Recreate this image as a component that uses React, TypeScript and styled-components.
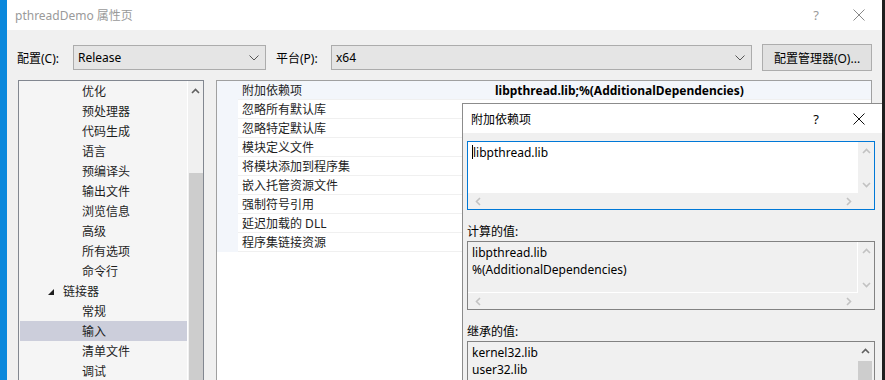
import React from "react";
import styled, { createGlobalStyle } from "styled-components";

const FONT = `"Noto Sans", "Noto Sans CJK SC", sans-serif`;

const GlobalStyle = createGlobalStyle`
  html, body {
    margin: 0;
    padding: 0;
    background: #1f1f1f;
  }
  body {
    font-family: ${FONT};
    font-size: 12px;
    color: #000;
  }
`;

const Screen = styled.div`
  position: relative;
  display: flex;
  width: 885px;
  height: 380px;
  overflow: hidden;
  background: #1f1f1f;
`;

const Desktop = styled.div`
  width: 7px;
  flex-shrink: 0;
  background: #0a88dc;
`;

const Window = styled.div`
  width: 875px;
  flex-shrink: 0;
  display: flex;
  flex-direction: column;
  background: #f0f0f0;
  & > * {
    flex-shrink: 0;
  }
`;

const TitleBar = styled.div<{ $dim?: boolean; $h: number }>`
  height: ${(p) => p.$h}px;
  flex-shrink: 0;
  display: flex;
  align-items: center;
  background: #fff;
  padding-left: 8px;
  color: ${(p) => (p.$dim ? "#9a9a9a" : "#000")};
`;

const TitleText = styled.div`
  flex: 1;
  font-size: 12px;
`;

const CaptionBtn = styled.div<{ $w: number }>`
  width: ${(p) => p.$w}px;
  display: flex;
  align-items: center;
  justify-content: center;
  font-size: 13px;
`;

const Toolbar = styled.div`
  display: flex;
  align-items: center;
  height: 27px;
  margin-top: 14px;
  padding-left: 10px;
`;

const Label = styled.span<{ $w: number }>`
  width: ${(p) => p.$w}px;
  white-space: nowrap;
`;

const Combo = styled.div<{ $w: number; $mr: number }>`
  width: ${(p) => p.$w}px;
  height: 25px;
  box-sizing: border-box;
  border: 1px solid #acacac;
  background: #e5e5e5;
  display: flex;
  align-items: center;
  padding: 0 6px 0 4px;
  margin-right: ${(p) => p.$mr}px;
  justify-content: space-between;
`;

const Button = styled.div`
  width: 110px;
  height: 27px;
  box-sizing: border-box;
  border: 1px solid #adadad;
  background: #e1e1e1;
  display: flex;
  align-items: center;
  justify-content: center;
  white-space: nowrap;
`;

const Panels = styled.div`
  display: flex;
  margin-top: 9px;
  padding-left: 11px;
  gap: 12px;
`;

const TreePanel = styled.div`
  width: 186px;
  height: 320px;
  box-sizing: border-box;
  border: 1px solid #828790;
  background: #f5f5f5;
  display: flex;
`;

const TreeList = styled.div`
  flex: 1;
`;

const TreeItem = styled.div<{ $indent: number; $selected?: boolean }>`
  position: relative;
  height: 20px;
  display: flex;
  align-items: center;
  margin-left: 1px;
  padding-left: ${(p) => p.$indent - 1}px;
  background: ${(p) => (p.$selected ? "#cccedb" : "transparent")};
  color: #1e1e1e;
`;

const Expander = styled.svg`
  position: absolute;
  left: 28px;
  top: 8px;
`;

const VScroll = styled.div`
  width: 16px;
  display: flex;
  flex-direction: column;
  align-items: center;
  background: #f0f0f0;
  border-left: 1px solid #fff;
  box-sizing: border-box;
`;

const ArrowCell = styled.div<{ $h: number }>`
  height: ${(p) => p.$h}px;
  flex-shrink: 0;
  width: 100%;
  display: flex;
  align-items: center;
  justify-content: center;
`;

const Thumb = styled.div<{ $top: number }>`
  width: 14px;
  flex: 1;
  margin-top: ${(p) => p.$top}px;
  background: #cdcdcd;
`;

const PropPanel = styled.div`
  width: 656px;
  height: 320px;
  box-sizing: border-box;
  border: 1px solid #a0a0a0;
  background: #fff;
`;

const PropRow = styled.div<{ $active?: boolean }>`
  display: flex;
  height: 19px;
  background: ${(p) => (p.$active ? "#f3f6fb" : "#fff")};
`;

const Gutter = styled.div`
  width: 21px;
  background: #f3f6fb;
`;

const PropName = styled.div`
  width: 249px;
  padding-left: 4px;
  display: flex;
  align-items: center;
  border-bottom: 1px solid #f0f0f0;
  color: #1e1e1e;
`;

const PropValue = styled.div`
  flex: 1;
  padding-left: 4px;
  display: flex;
  align-items: center;
  border-bottom: 1px solid #f0f0f0;
  font-weight: 700;
`;

const RightEdge = styled.div`
  width: 3px;
  flex-shrink: 0;
  background: #1f1f1f;
`;

const Dialog = styled.div`
  position: absolute;
  left: 462px;
  top: 103px;
  width: 420px;
  height: 290px;
  box-sizing: border-box;
  border: 1px solid #8c8c8c;
  border-right: none;
  background: #f0f0f0;
  display: flex;
  flex-direction: column;
  & > * {
    flex-shrink: 0;
  }
`;

const DialogBody = styled.div`
  padding: 8px 7px 0 4px;
  display: flex;
  flex-direction: column;
  & > * {
    flex-shrink: 0;
  }
`;

const FieldLabel = styled.div`
  margin-top: 11px;
  height: 20px;
  display: flex;
  align-items: center;
`;

const Box = styled.div<{ $focus?: boolean; $h: number }>`
  height: ${(p) => p.$h}px;
  box-sizing: border-box;
  border: 1px solid ${(p) => (p.$focus ? "#0078d7" : "#828282")};
  display: grid;
  grid-template-columns: 1fr 16px;
  grid-template-rows: 1fr 16px;
  background: #f0f0f0;
`;

const BoxText = styled.div<{ $white?: boolean }>`
  background: ${(p) => (p.$white ? "#fff" : "#f0f0f0")};
  border-right: 1px solid #fff;
  border-bottom: 1px solid #fff;
  padding: 2px 0 0 4px;
  line-height: 17px;
  white-space: pre;
`;

const BoxVScroll = styled.div`
  display: flex;
  flex-direction: column;
  justify-content: space-between;
  align-items: center;
  padding: 5px 0 4px;
`;

const BoxHScroll = styled.div`
  display: flex;
  align-items: center;
  justify-content: space-between;
  padding: 0 5px 0 6px;
`;

const Caret = styled.span`
  display: inline-block;
  width: 1px;
  height: 14px;
  background: #000;
  vertical-align: -2px;
`;

const OpenBox = styled.div`
  height: 60px;
  box-sizing: border-box;
  border: 1px solid #828282;
  border-bottom: none;
  display: flex;
  background: #f0f0f0;
`;

const OpenText = styled.div`
  flex: 1;
  padding: 2px 0 0 4px;
  line-height: 17px;
  white-space: pre;
`;

const OpenScroll = styled.div`
  width: 16px;
  display: flex;
  flex-direction: column;
  align-items: center;
  margin-right: 1px;
`;

type Dir = "up" | "down" | "left" | "right";

function Chevron({ dir, color }: { dir: Dir; color: string }) {
  const d: Record<Dir, string> = {
    up: "M1 6 L4.5 2.5 L8 6",
    down: "M1 3 L4.5 6.5 L8 3",
    left: "M6 1 L2.5 4.5 L6 8",
    right: "M3 1 L6.5 4.5 L3 8",
  };
  return (
    <svg width="9" height="9" viewBox="0 0 9 9">
      <path d={d[dir]} fill="none" stroke={color} strokeWidth="1.6" />
    </svg>
  );
}

function ComboArrow() {
  return (
    <svg width="10" height="6" viewBox="0 0 10 6">
      <path d="M0.5 0.5 L5 5 L9.5 0.5" fill="none" stroke="#555" strokeWidth="1" />
    </svg>
  );
}

function CloseGlyph({ color }: { color: string }) {
  return (
    <svg width="12" height="12" viewBox="0 0 12 12">
      <path d="M0.5 0.5 L11.5 11.5 M11.5 0.5 L0.5 11.5" stroke={color} strokeWidth="1" />
    </svg>
  );
}

const treeItems: { text: string; indent: number; expander?: boolean; selected?: boolean }[] = [
  { text: "优化", indent: 63 },
  { text: "预处理器", indent: 63 },
  { text: "代码生成", indent: 63 },
  { text: "语言", indent: 63 },
  { text: "预编译头", indent: 63 },
  { text: "输出文件", indent: 63 },
  { text: "浏览信息", indent: 63 },
  { text: "高级", indent: 63 },
  { text: "所有选项", indent: 63 },
  { text: "命令行", indent: 63 },
  { text: "链接器", indent: 44, expander: true },
  { text: "常规", indent: 63 },
  { text: "输入", indent: 63, selected: true },
  { text: "清单文件", indent: 63 },
  { text: "调试", indent: 63 },
];

const props: { name: string; value?: string }[] = [
  { name: "附加依赖项", value: "libpthread.lib;%(AdditionalDependencies)" },
  { name: "忽略所有默认库" },
  { name: "忽略特定默认库" },
  { name: "模块定义文件" },
  { name: "将模块添加到程序集" },
  { name: "嵌入托管资源文件" },
  { name: "强制符号引用" },
  { name: "延迟加载的 DLL" },
  { name: "程序集链接资源" },
];

export default function App() {
  return (
    <>
      <GlobalStyle />
      <Screen>
        <Desktop />
        <Window>
          <TitleBar $dim $h={30}>
            <TitleText>pthreadDemo 属性页</TitleText>
            <CaptionBtn $w={40}>?</CaptionBtn>
            <CaptionBtn $w={46}>
              <CloseGlyph color="#888" />
            </CaptionBtn>
          </TitleBar>
          <Toolbar>
            <Label $w={56}>配置(C):</Label>
            <Combo $w={193} $mr={10}>
              <span>Release</span>
              <ComboArrow />
            </Combo>
            <Label $w={55}>平台(P):</Label>
            <Combo $w={421} $mr={10}>
              <span>x64</span>
              <ComboArrow />
            </Combo>
            <Button>配置管理器(O)...</Button>
          </Toolbar>
          <Panels>
            <TreePanel>
              <TreeList>
                {treeItems.map((it) => (
                  <TreeItem key={it.text} $indent={it.indent} $selected={it.selected}>
                    {it.expander && (
                      <Expander width="7" height="7" viewBox="0 0 7 7">
                        <polygon points="6,0 6,6 0,6" fill="#1e1e1e" />
                      </Expander>
                    )}
                    {it.text}
                  </TreeItem>
                ))}
              </TreeList>
              <VScroll>
                <ArrowCell $h={20}>
                  <Chevron dir="up" color="#606060" />
                </ArrowCell>
                <Thumb $top={72} />
              </VScroll>
            </TreePanel>
            <PropPanel>
              {props.map((p, i) => (
                <PropRow key={p.name} $active={i === 0}>
                  <Gutter />
                  <PropName>{p.name}</PropName>
                  <PropValue>{p.value}</PropValue>
                </PropRow>
              ))}
            </PropPanel>
          </Panels>
        </Window>
        <RightEdge />
        <Dialog>
          <TitleBar $h={29}>
            <TitleText>附加依赖项</TitleText>
            <CaptionBtn $w={40}>?</CaptionBtn>
            <CaptionBtn $w={46}>
              <CloseGlyph color="#111" />
            </CaptionBtn>
          </TitleBar>
          <DialogBody>
            <Box $focus $h={69}>
              <BoxText $white>
                <Caret />
                libpthread.lib
              </BoxText>
              <BoxVScroll>
                <Chevron dir="up" color="#c2c2c2" />
                <Chevron dir="down" color="#c2c2c2" />
              </BoxVScroll>
              <BoxHScroll>
                <Chevron dir="left" color="#c2c2c2" />
                <Chevron dir="right" color="#c2c2c2" />
              </BoxHScroll>
              <div />
            </Box>
            <FieldLabel>计算的值:</FieldLabel>
            <Box $h={69}>
              <BoxText>{"libpthread.lib\n%(AdditionalDependencies)"}</BoxText>
              <BoxVScroll>
                <Chevron dir="up" color="#c2c2c2" />
                <Chevron dir="down" color="#c2c2c2" />
              </BoxVScroll>
              <BoxHScroll>
                <Chevron dir="left" color="#c2c2c2" />
                <Chevron dir="right" color="#c2c2c2" />
              </BoxHScroll>
              <div />
            </Box>
            <FieldLabel>继承的值:</FieldLabel>
            <OpenBox>
              <OpenText>{"kernel32.lib\nuser32.lib"}</OpenText>
              <OpenScroll>
                <ArrowCell $h={19}>
                  <Chevron dir="up" color="#606060" />
                </ArrowCell>
                <Thumb $top={0} />
              </OpenScroll>
            </OpenBox>
          </DialogBody>
        </Dialog>
      </Screen>
    </>
  );
}
